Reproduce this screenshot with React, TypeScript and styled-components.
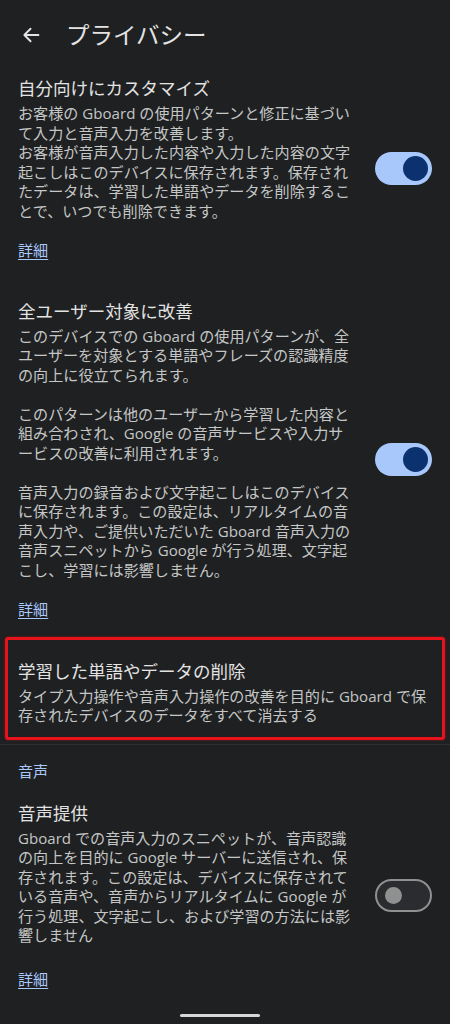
import React from "react";
import styled, { createGlobalStyle } from "styled-components";

const GlobalStyle = createGlobalStyle`
  html, body {
    margin: 0;
    padding: 0;
    background: #1f2022;
  }
  body {
    font-family: "Open Sans", "Noto Sans CJK JP", sans-serif;
  }
`;

const Screen = styled.div`
  position: relative;
  width: 450px;
  height: 1024px;
  overflow: hidden;
  background: #1f2022;
  color: #e3e3e3;
`;

const Header = styled.header`
  display: flex;
  align-items: center;
  height: 42px;
  padding: 14px 0 0 21px;
  gap: 25px;
`;

const BackButton = styled.button`
  display: flex;
  align-items: center;
  justify-content: center;
  width: 20px;
  height: 20px;
  padding: 0;
  border: none;
  background: transparent;
  color: #e3e3e3;
`;

const HeaderTitle = styled.h1`
  margin: 0;
  font-size: 23.5px;
  font-weight: 400;
  line-height: 30px;
  color: #e3e3e3;
`;

const Row = styled.div<{ $bottom?: number }>`
  display: flex;
  align-items: center;
  gap: 20px;
  padding: 20px 18px ${(p) => p.$bottom ?? 20}px 18px;
`;

const TextCol = styled.div`
  width: 337px;
  flex-shrink: 0;
`;

const Title = styled.div`
  font-size: 17.5px;
  line-height: 24px;
  color: #e3e3e3;
  margin-bottom: 4px;
`;

const Body = styled.p<{ $gap?: number }>`
  margin: ${(p) => p.$gap ?? 0}px 0 0;
  font-size: 15.1px;
  line-height: 19.5px;
  color: #c4c7c5;
`;

const Link = styled.a<{ $gap?: number }>`
  display: inline-block;
  margin-top: ${(p) => p.$gap ?? 19.5}px;
  font-size: 15.1px;
  line-height: 19.5px;
  color: #a8c7fa;
  text-decoration: underline;
  text-underline-offset: 3px;
`;

const Track = styled.div<{ $on: boolean }>`
  box-sizing: border-box;
  display: flex;
  align-items: center;
  justify-content: ${(p) => (p.$on ? "flex-end" : "flex-start")};
  width: 57px;
  height: 33px;
  flex-shrink: 0;
  border-radius: 17px;
  padding: ${(p) => (p.$on ? "0 4px" : "0 8px")};
  background: ${(p) => (p.$on ? "#a8c7fa" : "#2b2c2f")};
  border: ${(p) => (p.$on ? "none" : "2px solid #8e918f")};
`;

const Thumb = styled.div<{ $on: boolean }>`
  width: ${(p) => (p.$on ? 25 : 17)}px;
  height: ${(p) => (p.$on ? 25 : 17)}px;
  border-radius: 50%;
  background: ${(p) => (p.$on ? "#0b316f" : "#8e918f")};
`;

const Highlight = styled.div`
  margin: 0 5px;
  padding: 19px 6px 11px 10px;
  border: 3px solid #e8121c;
  border-radius: 3px;
  box-shadow: 0 0 2px rgba(232, 18, 28, 0.6);
`;

const Divider = styled.hr`
  margin: 4px 0 0;
  border: none;
  height: 1px;
  background: #2e2f32;
`;

const Category = styled.div`
  padding: 16px 18px 0;
  font-size: 15.1px;
  line-height: 20px;
  color: #a8c7fa;
`;

const HomeBar = styled.div`
  position: absolute;
  left: 180px;
  bottom: 7px;
  width: 80px;
  height: 3px;
  border-radius: 2px;
  background: #d8d8d8;
`;

const Toggle = ({ on }: { on: boolean }) => (
  <Track $on={on}>
    <Thumb $on={on} />
  </Track>
);

export default function App() {
  return (
    <Screen>
      <GlobalStyle />
      <Header>
        <BackButton aria-label="戻る">
          <svg width="20" height="20" viewBox="0 0 24 24" fill="none">
            <path
              d="M21 12H4.5M11.5 4.5 4 12l7.5 7.5"
              stroke="currentColor"
              strokeWidth="2.2"
              strokeLinecap="round"
              strokeLinejoin="round"
            />
          </svg>
        </BackButton>
        <HeaderTitle>プライバシー</HeaderTitle>
      </Header>

      <Row $bottom={18}>
        <TextCol>
          <Title>自分向けにカスタマイズ</Title>
          <Body>
            お客様の Gboard の使用パターンと修正に基づいて入力と音声入力を改善します。
            <br />
            お客様が音声入力した内容や入力した内容の文字起こしはこのデバイスに保存されます。保存されたデータは、学習した単語やデータを削除することで、いつでも削除できます。
          </Body>
          <Link>詳細</Link>
        </TextCol>
        <Toggle on />
      </Row>

      <Row $bottom={17}>
        <TextCol>
          <Title>全ユーザー対象に改善</Title>
          <Body>
            このデバイスでの Gboard の使用パターンが、全ユーザーを対象とする単語やフレーズの認識精度の向上に役立てられます。
          </Body>
          <Body $gap={19.5}>
            このパターンは他のユーザーから学習した内容と組み合わされ、Google の音声サービスや入力サービスの改善に利用されます。
          </Body>
          <Body $gap={19.5}>
            音声入力の録音および文字起こしはこのデバイスに保存されます。この設定は、リアルタイムの音声入力や、ご提供いただいた Gboard 音声入力の音声スニペットから Google が行う処理、文字起こし、学習には影響しません。
          </Body>
          <Link>詳細</Link>
        </TextCol>
        <Toggle on />
      </Row>

      <Highlight>
        <Title>学習した単語やデータの削除</Title>
        <Body>
          タイプ入力操作や音声入力操作の改善を目的に Gboard で保存されたデバイスのデータをすべて消去する
        </Body>
      </Highlight>
      <Divider />

      <Category>音声</Category>

      <Row>
        <TextCol>
          <Title>音声提供</Title>
          <Body>
            Gboard での音声入力のスニペットが、音声認識の向上を目的に Google サーバーに送信され、保存されます。この設定は、デバイスに保存されている音声や、音声からリアルタイムに Google が行う処理、文字起こし、および学習の方法には影響しません
          </Body>
          <Link $gap={24}>詳細</Link>
        </TextCol>
        <Toggle on={false} />
      </Row>

      <HomeBar />
    </Screen>
  );
}
